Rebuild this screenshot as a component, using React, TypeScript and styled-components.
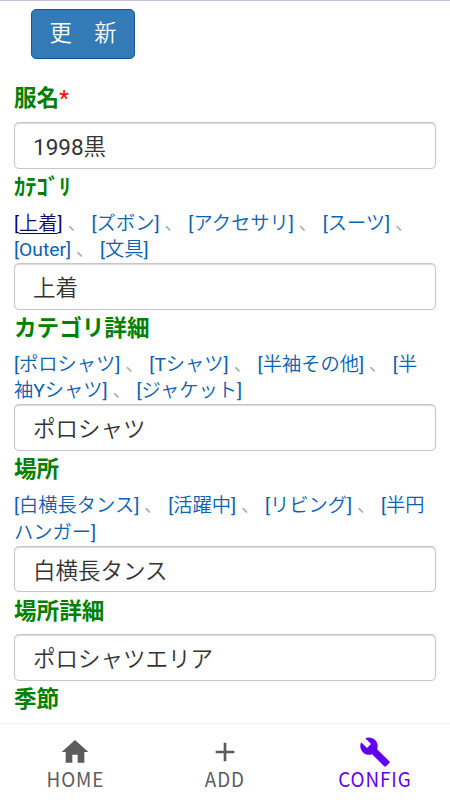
import React from "react";
import styled, { createGlobalStyle } from "styled-components";
import { MdAdd, MdBuild, MdHome } from "react-icons/md";

const lightStack = `Roboto, "Noto Sans CJK JP DemiLight", "Noto Sans CJK JP", sans-serif`;

const GlobalStyle = createGlobalStyle`
  * { box-sizing: border-box; }
  html, body { margin: 0; height: 100%; }
  body {
    background: #fff;
    font-family: Roboto, "Noto Sans CJK JP", sans-serif;
    color: #333;
  }
`;

const Screen = styled.div`
  display: flex;
  flex-direction: column;
  height: 800px;
  width: 450px;
  overflow: hidden;
  border-top: 1px solid #c6c0e0;
`;

const Form = styled.form`
  flex: 1;
  min-height: 0;
  overflow: hidden;
  padding: 8px 14px 0;
`;

const UpdateButton = styled.button`
  display: block;
  width: 104px;
  height: 50px;
  margin: 0 0 19px 17px;
  padding: 0 0 1px;
  border: 1px solid #0e5a9c;
  border-radius: 5px;
  background: #337ab7;
  color: #fff;
  font-family: ${lightStack};
  font-size: 22.4px;
  line-height: 1;
  white-space: pre;
`;

const Field = styled.section<{ $height: number }>`
  display: flex;
  flex-direction: column;
  height: ${(p) => p.$height}px;
`;

const Label = styled.label<{ $first?: boolean }>`
  flex: 1;
  padding-top: ${(p) => (p.$first ? 4.8 : 3.5)}px;
  color: #008000;
  font-size: 22.6px;
  font-weight: 700;
  line-height: 32px;
  white-space: nowrap;
`;

const Required = styled.span`
  color: #f00;
  font-weight: 400;
`;

const Choices = styled.div`
  margin-bottom: -0.5px;
  font-family: ${lightStack};
  font-size: 19.25px;
  line-height: 26.5px;
  color: #aaa;
`;

const ChoiceLine = styled.div`
  white-space: pre;
`;

const Choice = styled.a`
  color: #0b62b0;
`;

const ActiveChoice = styled(Choice)`
  color: #0a0a60;

  span {
    text-decoration: underline;
    text-decoration-thickness: 1px;
    text-underline-offset: 3px;
  }
`;

const Input = styled.input`
  flex: none;
  width: 422px;
  height: 46.5px;
  padding: 0 18px;
  border: 1px solid #c6c6c6;
  border-radius: 5px;
  box-shadow: inset 0 1px 1px rgba(0, 0, 0, 0.15), 0 0 1px rgba(0, 0, 0, 0.1);
  background: #fff;
  color: #333;
  font-family: ${lightStack};
  font-size: 22.5px;
  outline: none;
`;

const Nav = styled.nav`
  flex: none;
  display: grid;
  grid-template-columns: repeat(3, 1fr);
  height: 78px;
  border-top: 3px solid #f8f8f8;
  background: #fff;
`;

const NavItem = styled.a<{ $active?: boolean }>`
  display: flex;
  flex-direction: column;
  align-items: center;
  padding-top: 11px;
  color: ${(p) => (p.$active ? "#6200ee" : "#5c5c5c")};

  svg {
    display: block;
    width: 32px;
    height: 32px;
  }
`;

const NavText = styled.span`
  margin-top: -2px;
  font-family: "Noto Sans CJK JP", sans-serif;
  font-size: 20.5px;
  letter-spacing: 1px;
  line-height: 24px;
  transform: scaleX(0.92);
`;

type FieldData = {
  label: string;
  value?: string;
  height: number;
  required?: boolean;
  lines?: string[][];
};

const fields: FieldData[] = [
  { label: "服名", value: "1998黒", height: 90.5, required: true },
  {
    label: "ｶﾃｺﾞﾘ",
    value: "上着",
    height: 141,
    lines: [
      ["[上着]", "[ズボン]", "[アクセサリ]", "[スーツ]", ""],
      ["[Outer]", "[文具]"],
    ],
  },
  {
    label: "カテゴリ詳細",
    value: "ポロシャツ",
    height: 141,
    lines: [
      ["[ポロシャツ]", "[Tシャツ]", "[半袖その他]", "[半"],
      ["袖Yシャツ]", "[ジャケット]"],
    ],
  },
  {
    label: "場所",
    value: "白横長タンス",
    height: 141.5,
    lines: [
      ["[白横長タンス]", "[活躍中]", "[リビング]", "[半円"],
      ["ハンガー]"],
    ],
  },
  { label: "場所詳細", value: "ポロシャツエリア", height: 88.5 },
  { label: "季節", height: 42 },
];

function ChoiceText({ text, active }: { text: string; active: boolean }) {
  if (!active) return <Choice>{text}</Choice>;
  return (
    <ActiveChoice>
      [<span>{text.slice(1, -1)}</span>]
    </ActiveChoice>
  );
}

function FormField({ field }: { field: FieldData }) {
  return (
    <Field $height={field.height}>
      <Label $first={field.required}>
        {field.label}
        {field.required && <Required>*</Required>}
      </Label>
      {field.lines && (
        <Choices>
          {field.lines.map((line, row) => (
            <ChoiceLine key={row}>
              {line.map((text, i) => (
                <React.Fragment key={i}>
                  {i > 0 && " 、 "}
                  <ChoiceText text={text} active={text === "[上着]"} />
                </React.Fragment>
              ))}
            </ChoiceLine>
          ))}
        </Choices>
      )}
      {field.value && <Input defaultValue={field.value} />}
    </Field>
  );
}

export default function App() {
  return (
    <>
      <GlobalStyle />
      <Screen>
        <Form>
          <UpdateButton type="button">{"更　新"}</UpdateButton>
          {fields.map((field) => (
            <FormField key={field.label} field={field} />
          ))}
        </Form>
        <Nav>
          <NavItem>
            <MdHome />
            <NavText>HOME</NavText>
          </NavItem>
          <NavItem>
            <MdAdd />
            <NavText>ADD</NavText>
          </NavItem>
          <NavItem $active>
            <MdBuild />
            <NavText>CONFIG</NavText>
          </NavItem>
        </Nav>
      </Screen>
    </>
  );
}
